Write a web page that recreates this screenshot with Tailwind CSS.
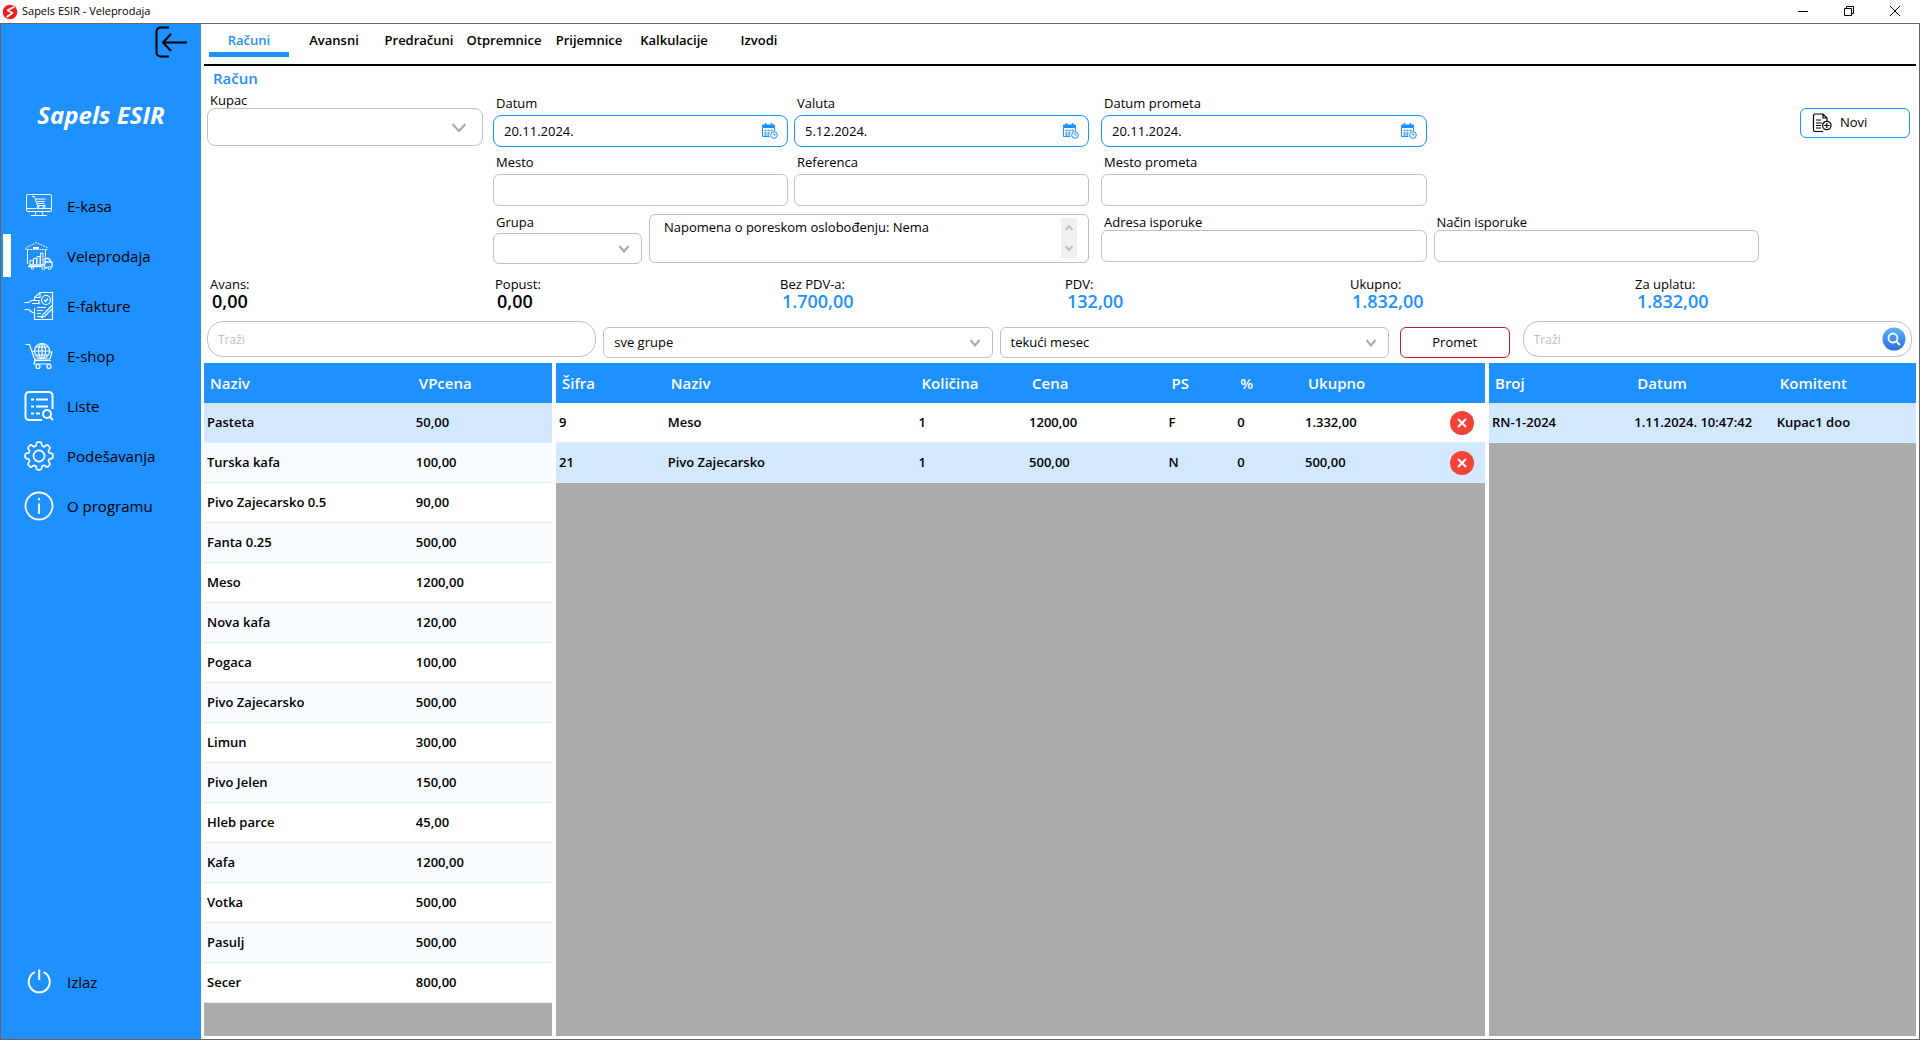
<!DOCTYPE html>
<html lang="sr-Latn">

<head>
    <meta charset="UTF-8">
    <meta name="viewport" content="width=device-width, initial-scale=1.0">
    <title>Sapels ESIR - Veleprodaja</title>
    <script src="https://cdn.jsdelivr.net/npm/@tailwindcss/browser@4"></script>
</head>

<body class="h-screen flex flex-col bg-white text-black font-['Open_Sans',sans-serif] text-[13px] overflow-hidden">

    <!-- Title bar -->
    <header class="h-6 shrink-0 flex items-center justify-between border-b border-[#666666]">
        <div class="flex items-center gap-1 pl-0.5">
            <svg class="w-4 h-4" viewBox="0 0 16 16">
                <circle cx="8" cy="8" r="7.3" fill="#ee1c25" />
                <path d="M11.5 3.2L5.5 6.2L10.5 9L5 12.8" fill="none" stroke="#fff" stroke-width="1.8" stroke-linejoin="round" stroke-linecap="round" />
            </svg>
            <h1 class="text-[11px]">Sapels ESIR - Veleprodaja</h1>
        </div>
        <div class="flex items-center h-full pr-0.5 pb-0.5">
            <button aria-label="Minimize" class="w-[46px] h-full flex items-center justify-center">
                <svg class="w-3 h-3" viewBox="0 0 12 12"><path d="M1 6.5h10" stroke="#000" /></svg>
            </button>
            <button aria-label="Restore" class="w-[46px] h-full flex items-center justify-center">
                <svg class="w-3 h-3" viewBox="0 0 12 12" fill="none" stroke="#000">
                    <path d="M1.5 3.5h7v7h-7zM3.5 3.5v-2h7v7h-2" />
                </svg>
            </button>
            <button aria-label="Close" class="w-[46px] h-full flex items-center justify-center">
                <svg class="w-3 h-3" viewBox="0 0 12 12" stroke="#000"><path d="M1 1l10 10M11 1L1 11" /></svg>
            </button>
        </div>
    </header>

    <div class="flex-1 min-h-0 flex border-x border-b border-[#666666]">

        <!-- Sidebar -->
        <aside class="w-[200px] shrink-0 bg-[#1e90ff] flex flex-col">
            <button aria-label="Sakrij meni" class="self-end mr-3.5 mt-0.5">
                <svg class="w-8 h-8" viewBox="0 0 32 32" fill="none" stroke="#000" stroke-width="2">
                    <path d="M14 1.5H5.5a4 4 0 0 0-4 4v21a4 4 0 0 0 4 4H14" />
                    <path d="M32 16.5H8M16 8l-8 8.500l8 8.500" />
                </svg>
            </button>
            <h2 class="mt-[41px] text-center text-white text-[24px] leading-8 font-bold italic">Sapels ESIR</h2>

            <nav class="mt-[50px] flex flex-col text-[15px]">
                <a href="#" class="h-[50px] flex items-center pl-[23px] gap-[13px]">
                    <svg class="w-[30px] h-[30px]" viewBox="0 0 30 30" fill="none" stroke="#fff" stroke-width="1">
                        <rect x="2.500" y="3.500" width="25" height="17" rx="1.500" />
                        <path d="M2.500 17.500h25M12 21l-1 3M18 21l1 3M7 24.500h16" />
                        <path d="M8 5.500h2.500l3 9h8M11.500 8h10M12.500 10.500h8.500M13 12.500h7.500" />
                        <circle cx="14" cy="16" r="1" /><circle cx="20" cy="16" r="1" />
                    </svg>
                    E-kasa
                </a>
                <a href="#" class="relative h-[50px] flex items-center pl-[23px] gap-[13px]">
                    <span class="absolute left-0.5 top-[3px] w-2 h-[43px] bg-white"></span>
                    <svg class="w-[30px] h-[30px]" viewBox="0 0 30 30" fill="none" stroke="#fff" stroke-width="1">
                        <path d="M2 8.500V6.500L12.500 1.500L23 6.500V8.500z" stroke-dasharray="2 1" />
                        <path d="M9 7h6" stroke-width="2" />
                        <path d="M3.500 9v14M21.500 9v7M6 23v-3.500h3V23M9.500 23v-5.500h3V23M13 23v-7.500h3V23M16.500 23v-11h2.500V23" />
                        <path d="M5 24h16M21 23.500V17.500h3.500l3.500 4v5M21 21h7M21 26.500h2.500" stroke-width="1.300" />
                        <circle cx="8.500" cy="27" r="1.200" /><circle cx="19.500" cy="27" r="1.500" /><circle cx="25.500" cy="27" r="1.500" />
                        <path d="M4 25.500h14" stroke-width="1.300" />
                    </svg>
                    Veleprodaja
                </a>
                <a href="#" class="h-[50px] flex items-center pl-[23px] gap-[13px]">
                    <svg class="w-[30px] h-[30px]" viewBox="0 0 30 30" fill="none" stroke="#fff" stroke-width="1.200">
                        <path d="M10.500 9V6.500L16 1.500h12.500v27h-18V17M16 1.500v5h-5" />
                        <circle cx="22" cy="9" r="4.500" /><path d="M20 9l1.500 1.500L24 7.500" />
                        <path d="M0.500 11.500h4l3-2h7.500v3H8M0.500 18.500h4l4 3h2" />
                        <path d="M13 16.500h9M13 19.500h6M13 22.500h4M13 25.500h4M28 14.500l-9 9-1.500 3 3-1 8-8" />
                    </svg>
                    E-fakture
                </a>
                <a href="#" class="h-[50px] flex items-center pl-[23px] gap-[13px]">
                    <svg class="w-[30px] h-[30px]" viewBox="0 0 30 30" fill="none" stroke="#fff" stroke-width="1.200">
                        <path d="M1.500 3.500h4l5.500 16h16M8 10l20 1-2 7H11M11 19.500l-1 3.500h17" />
                        <circle cx="18" cy="10" r="7.500" fill="#1e90ff" />
                        <ellipse cx="18" cy="10" rx="3.500" ry="7.500" /><path d="M18 2.500v15M10.500 10h15M12 6h12M12 14h12" />
                        <circle cx="14" cy="25.500" r="2" /><circle cx="25" cy="25.500" r="2" />
                    </svg>
                    E-shop
                </a>
                <a href="#" class="h-[50px] flex items-center pl-[23px] gap-[13px]">
                    <svg class="w-[30px] h-[30px]" viewBox="0 0 30 30" fill="none" stroke="#fff" stroke-width="2">
                        <path d="M18 29H5a3.500 3.500 0 0 1-3.500-3.500V4.500A3.500 3.500 0 0 1 5 1h20a3.500 3.500 0 0 1 3.500 3.500V18" />
                        <path d="M7 8.500h3M12 8.500h12M7 15.500h3M12 15.500h12M7 22.500h3M12 22.500h4" stroke-width="1.800" />
                        <circle cx="23" cy="23" r="4" /><path d="M26 26l3 3" />
                    </svg>
                    Liste
                </a>
                <a href="#" class="h-[50px] flex items-center pl-[23px] gap-[13px]">
                    <svg class="w-[30px] h-[30px]" viewBox="2.3 2.3 19.4 19.4" fill="none" stroke="#fff" stroke-width="1.100">
                        <path d="M10.343 3.940c.09-.542.56-.94 1.110-.94h1.093c.55 0 1.020.398 1.110.94l.149.894c.07.424.384.764.78.93.398.164.855.142 1.205-.108l.737-.527a1.125 1.125 0 0 1 1.450.12l.773.774c.39.389.44 1.002.12 1.450l-.527.737c-.25.35-.272.806-.107 1.204.165.397.505.71.93.78l.893.15c.543.09.94.56.94 1.109v1.094c0 .55-.397 1.020-.94 1.110l-.893.149c-.425.07-.765.383-.93.78-.165.398-.143.854.107 1.204l.527.738c.32.447.269 1.060-.12 1.450l-.774.773a1.125 1.125 0 0 1-1.449.12l-.738-.527c-.35-.25-.806-.272-1.203-.107-.397.165-.71.505-.781.929l-.149.894c-.09.542-.56.94-1.110.94h-1.094c-.55 0-1.019-.398-1.110-.94l-.148-.894c-.071-.424-.384-.764-.781-.93-.398-.164-.854-.142-1.204.108l-.738.527c-.447.32-1.060.269-1.450-.12l-.773-.774a1.125 1.125 0 0 1-.12-1.450l.527-.737c.25-.35.273-.806.108-1.204-.165-.397-.505-.71-.93-.78l-.894-.15c-.542-.09-.94-.56-.94-1.109v-1.094c0-.55.398-1.020.94-1.110l.894-.149c.424-.07.765-.383.93-.78.165-.398.143-.854-.107-1.204l-.527-.738a1.125 1.125 0 0 1 .12-1.450l.773-.773a1.125 1.125 0 0 1 1.450-.12l.737.527c.35.25.807.272 1.204.107.397-.165.71-.505.78-.929l.15-.894z" />
                        <circle cx="12" cy="12" r="3.600" />
                    </svg>
                    Podešavanja
                </a>
                <a href="#" class="h-[50px] flex items-center pl-[23px] gap-[13px]">
                    <svg class="w-[30px] h-[30px]" viewBox="0 0 30 30" fill="none" stroke="#fff" stroke-width="1.800">
                        <circle cx="15" cy="15" r="13.500" />
                        <path d="M15 12.500V23M15 7v2.200" />
                    </svg>
                    O programu
                </a>
            </nav>

            <a href="#" class="mt-auto mb-8 h-[50px] flex items-center pl-[23px] gap-[13px] text-[15px]">
                <svg class="w-[30px] h-[30px]" viewBox="0 0 30 30" fill="none" stroke="#fff" stroke-width="2">
                    <path d="M11 5.200a10.500 10.500 0 1 0 8.500 0M15.200 2.500V13" />
                </svg>
                Izlaz
            </a>
        </aside>

        <!-- Content -->
        <main class="flex-1 min-w-0 flex flex-col pl-[3px] pr-[3px] pb-[3px]">

            <!-- Tabs -->
            <nav class="h-[42px] shrink-0 flex gap-[5px] pl-[5px] border-b-2 border-black font-semibold text-center">
                <a href="#" class="w-20 h-[33px] pt-[7px] leading-[18px] text-[#1e90ff] border-b-5 border-[#1e90ff]">Računi</a>
                <a href="#" class="w-20 pt-[7px] leading-[18px]">Avansni</a>
                <a href="#" class="w-20 pt-[7px] leading-[18px]">Predračuni</a>
                <a href="#" class="w-20 pt-[7px] leading-[18px]">Otpremnice</a>
                <a href="#" class="w-20 pt-[7px] leading-[18px]">Prijemnice</a>
                <a href="#" class="w-20 pt-[7px] leading-[18px]">Kalkulacije</a>
                <a href="#" class="w-20 pt-[7px] leading-[18px]">Izvodi</a>
            </nav>

            <h2 class="pl-[9px] pt-px h-[26px] leading-[22px] text-[15px] font-semibold text-[#1e90ff]">Račun</h2>

            <!-- Invoice form -->
            <form class="grid grid-cols-[276fr_596fr_660fr_147fr] gap-x-2.5 pl-[3px]">
                <div class="flex flex-col">
                    <label for="kupac" class="pl-[3px] leading-4">Kupac</label>
                    <div class="relative">
                        <select id="kupac" class="appearance-none w-full h-[38px] px-3 border border-[#c0c0c0] rounded-lg"><option></option></select>
                        <svg class="absolute right-4 top-3.5 w-4 h-3 pointer-events-none" viewBox="0 0 16 12" fill="none" stroke="#a9a9a9" stroke-width="2"><path d="M1.500 2L8 9l6.500-7" /></svg>
                    </div>
                </div>

                <div class="pt-[3px] flex flex-col">
                    <div class="grid grid-cols-2 gap-x-1.5 gap-y-[7px]">
                        <div class="flex flex-col gap-1">
                            <label for="datum" class="pl-[3px] leading-4">Datum</label>
                            <div class="relative">
                                <input id="datum" type="text" value="20.11.2024." class="block w-full h-8 pl-2.5 pr-9 border border-[#1e90ff] rounded-lg">
                                <button type="button" aria-label="Izaberi datum" class="absolute right-2.5 top-2 cal"></button>
                            </div>
                        </div>
                        <div class="flex flex-col gap-1">
                            <label for="valuta" class="pl-[3px] leading-4">Valuta</label>
                            <div class="relative">
                                <input id="valuta" type="text" value="5.12.2024." class="block w-full h-8 pl-2.5 pr-9 border border-[#1e90ff] rounded-lg">
                                <button type="button" aria-label="Izaberi valutu" class="absolute right-2.5 top-2 cal"></button>
                            </div>
                        </div>
                        <div class="flex flex-col gap-1">
                            <label for="mesto" class="pl-[3px] leading-4">Mesto</label>
                            <input id="mesto" type="text" class="h-8 px-2.5 border border-[#c0c0c0] rounded-md">
                        </div>
                        <div class="flex flex-col gap-1">
                            <label for="referenca" class="pl-[3px] leading-4">Referenca</label>
                            <input id="referenca" type="text" class="h-8 px-2.5 border border-[#c0c0c0] rounded-md">
                        </div>
                    </div>
                    <div class="mt-2 grid grid-cols-[149fr_440fr] gap-x-[7px]">
                        <div class="flex flex-col gap-[3px]">
                            <label for="grupa" class="pl-[3px] leading-4">Grupa</label>
                            <div class="relative">
                                <select id="grupa" class="block appearance-none w-full h-[31px] px-2.5 border border-[#c0c0c0] rounded-md"><option></option></select>
                                <svg class="absolute right-3 top-3 w-3 h-2 pointer-events-none" viewBox="0 0 12 8" fill="none" stroke="#a9a9a9" stroke-width="2"><path d="M1.500 1L6 6.500L10.500 1" /></svg>
                            </div>
                        </div>
                        <div class="relative h-[49px]">
                            <textarea aria-label="Napomena" class="block w-full h-full resize-none overflow-hidden pl-3.5 pr-8 pt-[3px] leading-[18px] border border-[#c0c0c0] rounded-md">Napomena o poreskom oslobođenju: Nema</textarea>
                            <div class="absolute right-3 top-1 w-4 h-10 bg-[#f0f0f0] flex flex-col items-center justify-between py-1.5">
                                <svg class="w-2 h-2" viewBox="0 0 8 8" fill="none" stroke="#bfbfbf" stroke-width="2"><path d="M0.500 6L4 2l3.500 4" /></svg>
                                <svg class="w-2 h-2" viewBox="0 0 8 8" fill="none" stroke="#bfbfbf" stroke-width="2"><path d="M0.500 2L4 6l3.500-4" /></svg>
                            </div>
                        </div>
                    </div>
                </div>

                <div class="pt-[3px] pl-0.5 grid grid-cols-2 gap-x-[7px] content-start">
                    <div class="flex flex-col gap-1">
                        <label for="datum-prometa" class="pl-[3px] leading-4">Datum prometa</label>
                        <div class="relative">
                            <input id="datum-prometa" type="text" value="20.11.2024." class="block w-full h-8 pl-2.5 pr-9 border border-[#1e90ff] rounded-lg">
                            <button type="button" aria-label="Izaberi datum prometa" class="absolute right-2.5 top-2 cal"></button>
                        </div>
                    </div>
                    <div class="col-start-1 mt-[7px] flex flex-col gap-1">
                        <label for="mesto-prometa" class="pl-[3px] leading-4">Mesto prometa</label>
                        <input id="mesto-prometa" type="text" class="h-8 px-2.5 border border-[#c0c0c0] rounded-md">
                    </div>
                    <div class="col-start-1 mt-2 flex flex-col">
                        <label for="adresa" class="pl-[3px] leading-4">Adresa isporuke</label>
                        <input id="adresa" type="text" class="h-8 px-2.5 border border-[#c0c0c0] rounded-md">
                    </div>
                    <div class="mt-2 flex flex-col">
                        <label for="nacin" class="pl-[3px] leading-4">Način isporuke</label>
                        <input id="nacin" type="text" class="h-8 px-2.5 border border-[#c0c0c0] rounded-md">
                    </div>
                </div>

                <div class="pt-4 pr-1.5 flex justify-end items-start">
                    <button type="button" class="w-[110px] h-[30px] pl-[11px] flex items-center gap-2 border border-[#1e90ff] rounded-md">
                        <svg class="w-5 h-5" viewBox="0 0 20 20" fill="none" stroke="#000" stroke-width="1.200">
                            <path d="M11 18.500H3a1.500 1.500 0 0 1-1.500-1.500V2.500A1.500 1.500 0 0 1 3 1h8l4 4v4M11 1v4h4" />
                            <path d="M4 7h5M4 10h6M4 12.500h5M4 15h5" />
                            <circle cx="14.800" cy="12.500" r="4.200" /><path d="M14.800 10v5M12.300 12.500h5" />
                        </svg>
                        Novi
                    </button>
                </div>
            </form>

            <!-- Totals -->
            <dl class="mt-3 pl-1.5 -mr-1 grid grid-cols-6">
                <div><dt class="leading-4">Avans:</dt><dd class="pl-0.5 leading-[18px] text-[18px] font-semibold">0,00</dd></div>
                <div><dt class="leading-4">Popust:</dt><dd class="pl-0.5 leading-[18px] text-[18px] font-semibold">0,00</dd></div>
                <div><dt class="leading-4">Bez PDV-a:</dt><dd class="pl-0.5 leading-[18px] text-[18px] font-semibold text-[#1e90ff]">1.700,00</dd></div>
                <div><dt class="leading-4">PDV:</dt><dd class="pl-0.5 leading-[18px] text-[18px] font-semibold text-[#1e90ff]">132,00</dd></div>
                <div><dt class="leading-4">Ukupno:</dt><dd class="pl-0.5 leading-[18px] text-[18px] font-semibold text-[#1e90ff]">1.832,00</dd></div>
                <div><dt class="leading-4">Za uplatu:</dt><dd class="pl-0.5 leading-[18px] text-[18px] font-semibold text-[#1e90ff]">1.832,00</dd></div>
            </dl>

            <!-- Filters -->
            <div class="mt-[11px] h-[37px] pl-[3px] pr-1 grid grid-cols-[1fr_1fr_1fr_120px_1fr] gap-x-[7px] items-end">
                <input type="text" aria-label="Traži artikal" placeholder="Traži" class="self-start w-full h-9 px-2.5 text-[12px] border border-[#c0c0c0] rounded-2xl placeholder:text-[#c0c0c0]">
                <div class="relative">
                    <select aria-label="Grupa artikala" class="block appearance-none w-full h-[31px] px-2.5 border border-[#c0c0c0] rounded-md"><option>sve grupe</option></select>
                    <svg class="absolute right-3 top-3 w-3 h-2 pointer-events-none" viewBox="0 0 12 8" fill="none" stroke="#a9a9a9" stroke-width="2"><path d="M1.500 1L6 6.500L10.500 1" /></svg>
                </div>
                <div class="relative">
                    <select aria-label="Period" class="block appearance-none w-full h-[31px] px-2.5 border border-[#c0c0c0] rounded-md"><option>tekući mesec</option></select>
                    <svg class="absolute right-3 top-3 w-3 h-2 pointer-events-none" viewBox="0 0 12 8" fill="none" stroke="#a9a9a9" stroke-width="2"><path d="M1.500 1L6 6.500L10.500 1" /></svg>
                </div>
                <button class="h-[31px] ml-1 mr-1.5 border border-[#b22222] rounded-md">Promet</button>
                <div class="relative self-start">
                    <input type="text" aria-label="Traži račun" placeholder="Traži" class="block w-full h-9 px-2.5 text-[12px] border border-[#c0c0c0] rounded-2xl placeholder:text-[#c0c0c0]">
                    <button aria-label="Traži" class="absolute right-1.5 top-1.5">
                        <svg class="w-6 h-6" viewBox="0 0 24 24" fill="none" stroke="#fff" stroke-width="1.800">
                            <defs><linearGradient id="lupa" x1="0" y1="0" x2="0" y2="1"><stop offset="0" stop-color="#56b8f5" /><stop offset="1" stop-color="#3268e0" /></linearGradient></defs>
                            <circle cx="12" cy="12" r="11.500" fill="url(#lupa)" stroke="none" />
                            <circle cx="11" cy="11" r="4.500" /><path d="M14.500 14.500l3.500 3.500" />
                        </svg>
                    </button>
                </div>
            </div>

            <!-- Tables -->
            <div class="mt-[5px] flex-1 min-h-0 grid grid-cols-[348fr_929fr_427fr] gap-x-1">
                <div class="bg-[#ababab] overflow-hidden">
                    <table class="w-full table-fixed border-separate border-spacing-0 text-left font-semibold">
                        <colgroup><col class="w-[60%]"><col></colgroup>
                        <thead class="bg-[#1e90ff] text-white text-[15px]">
                            <tr class="h-10">
                                <th class="pl-1.5 font-semibold">Naziv</th>
                                <th class="pl-1.5 font-semibold">VPcena</th>
                            </tr>
                        </thead>
                        <tbody id="artikli"></tbody>
                    </table>
                </div>

                <div class="bg-[#ababab] overflow-hidden">
                    <table class="w-full table-fixed border-separate border-spacing-0 text-left font-semibold">
                        <colgroup>
                            <col class="w-[11.700%]"><col class="w-[27%]"><col class="w-[11.900%]"><col class="w-[15%]">
                            <col class="w-[7.400%]"><col class="w-[7.300%]"><col class="w-[15%]"><col>
                        </colgroup>
                        <thead class="bg-[#1e90ff] text-white text-[15px]">
                            <tr class="h-10">
                                <th class="pl-1.5 font-semibold">Šifra</th>
                                <th class="pl-1.5 font-semibold">Naziv</th>
                                <th class="pl-1.5 font-semibold">Količina</th>
                                <th class="pl-1.5 font-semibold">Cena</th>
                                <th class="pl-1.5 font-semibold">PS</th>
                                <th class="pl-1.5 font-semibold">%</th>
                                <th class="pl-1.5 font-semibold">Ukupno</th>
                                <th></th>
                            </tr>
                        </thead>
                        <tbody id="stavke"></tbody>
                    </table>
                </div>

                <div class="bg-[#ababab] overflow-hidden">
                    <table class="w-full table-fixed border-separate border-spacing-0 text-left font-semibold">
                        <thead class="bg-[#1e90ff] text-white text-[15px]">
                            <tr class="h-10">
                                <th class="pl-1.5 font-semibold">Broj</th>
                                <th class="pl-1.5 font-semibold">Datum</th>
                                <th class="pl-1.5 font-semibold">Komitent</th>
                            </tr>
                        </thead>
                        <tbody>
                            <tr class="h-10 bg-[#d1e8ff]">
                                <td class="pl-[3px] pt-px border-b border-[#dbedff]">RN-1-2024</td>
                                <td class="pl-[3px] pt-px border-b border-[#dbedff]">1.11.2024. 10:47:42</td>
                                <td class="pl-[3px] pt-px border-b border-[#dbedff]">Kupac1 doo</td>
                            </tr>
                        </tbody>
                    </table>
                </div>
            </div>
        </main>
    </div>

    <script>
        const artikli = [
            ['Pasteta', '50,00'],
            ['Turska kafa', '100,00'],
            ['Pivo Zajecarsko 0.5', '90,00'],
            ['Fanta 0.25', '500,00'],
            ['Meso', '1200,00'],
            ['Nova kafa', '120,00'],
            ['Pogaca', '100,00'],
            ['Pivo Zajecarsko', '500,00'],
            ['Limun', '300,00'],
            ['Pivo Jelen', '150,00'],
            ['Hleb parce', '45,00'],
            ['Kafa', '1200,00'],
            ['Votka', '500,00'],
            ['Pasulj', '500,00'],
            ['Secer', '800,00']
        ];

        const stavke = [
            ['9', 'Meso', '1', '1200,00', 'F', '0', '1.332,00'],
            ['21', 'Pivo Zajecarsko', '1', '500,00', 'N', '0', '500,00']
        ];

        // First row is the selected one, the rest are striped
        document.getElementById('artikli').innerHTML = artikli.map((a, i) => `
            <tr class="h-10 ${i === 0 ? 'bg-[#d1e8ff]' : i % 2 ? 'bg-[#f8fbff]' : 'bg-white'}">
                <td class="pl-[3px] pt-px border-b border-[#dbedff]">${a[0]}</td>
                <td class="pl-[3px] pt-px border-b border-[#dbedff]">${a[1]}</td>
            </tr>`).join('');

        document.getElementById('stavke').innerHTML = stavke.map((s, i) => `
            <tr class="h-10 ${i === 1 ? 'bg-[#d1e8ff]' : 'bg-white'}">
                ${s.map(v => `<td class="pl-[3px] pt-px border-b border-[#dbedff]">${v}</td>`).join('')}
                <td class="pl-[9px] border-b border-[#dbedff]">
                    <button aria-label="Obriši" class="block">
                        <svg class="w-6 h-6" viewBox="0 0 24 24">
                            <circle cx="12" cy="12" r="12" fill="#f44336" />
                            <path d="M8 8l8 8M16 8l-8 8" stroke="#fff" stroke-width="2" />
                        </svg>
                    </button>
                </td>
            </tr>`).join('');

        // Calendar icon for the date fields
        document.querySelectorAll('.cal').forEach(b => {
            b.innerHTML = `
                <svg class="w-4 h-4" viewBox="0 0 16 16" fill="none" stroke="#1e90ff">
                    <path d="M0.500 2h12v2.500h-12z" fill="#1e90ff" />
                    <path d="M3.500 0v3M9.500 0v3" stroke-width="1.500" />
                    <path d="M0.500 5v8.500h7M12.500 5v3" />
                    <path d="M2.500 7.500h2M5.500 7.500h2M8.500 7.500h2M2.500 10h2M5.500 10h2M2.500 12h2M5.500 12h1.500" stroke-width="1.300" />
                    <circle cx="12" cy="12" r="3.300" fill="#fff" /><path d="M12 10v2h1.500" />
                </svg>`;
        });
    </script>
</body>

</html>
